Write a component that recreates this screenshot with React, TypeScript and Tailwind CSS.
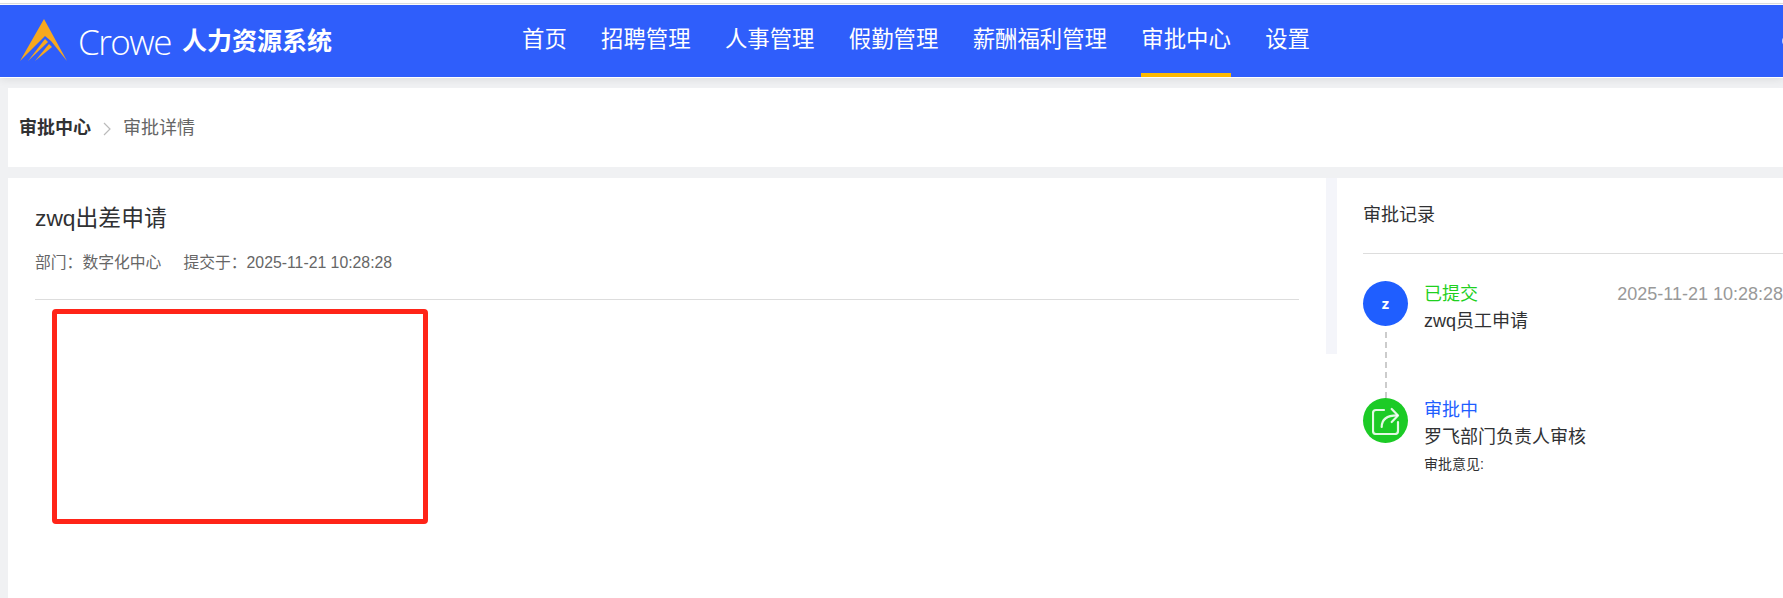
const cjk = "font-['Liberation_Sans','Noto_Sans_CJK_SC',sans-serif]";

const navItems = ["首页", "招聘管理", "人事管理", "假勤管理", "薪酬福利管理", "审批中心", "设置"];

function Logo() {
  return (
    <svg width="48" height="44" viewBox="0 0 48 44" className="shrink-0" fill="#f7a81f">
      <path d="M0 42 L24 0 L47 42 L31 22 L25 17 Z" />
      <path d="M8 42 L25 20 L28 23 Z" />
      <path d="M15 42 L29 25 L32 28 Z" />
    </svg>
  );
}

function Header() {
  return (
    <header className="h-[72px] bg-[#2f5efb] flex items-center shrink-0 relative z-10 shadow-[0_1px_0_#fff,0_3px_8px_rgba(0,0,0,0.08)]">
      <div className="w-[522px] pl-[20px] flex items-center shrink-0">
        <Logo />
        <span className="ml-[10px] text-[35px] leading-none font-['Open_Sans'] font-light text-white tracking-[-1.5px]">Crowe</span>
        <span className="ml-[11px] text-[25px] font-bold text-white pt-[2px]">人力资源系统</span>
      </div>
      <nav className="flex gap-[34.3px] h-full">
        {navItems.map(item => (
          <div key={item} className="relative flex items-center text-[22.4px] text-white whitespace-nowrap pb-[2px]">
            {item}
            {item === "审批中心" && <span className="absolute left-0 right-0 bottom-0 h-[4px] bg-[#fdb900]" />}
          </div>
        ))}
      </nav>
      <span className="absolute left-[1782px] top-[30px] w-[14px] h-[12px] rounded-full border-2 border-white/70" />
    </header>
  );
}

function Breadcrumb() {
  return (
    <div className="ml-[8px] mt-[11px] h-[79px] bg-white pl-[11px] pt-[2px] flex items-center text-[18px]">
      <span className="font-bold text-[#303133]">审批中心</span>
      <svg width="10" height="16" viewBox="0 0 10 16" className="ml-[11px] mr-[11px]">
        <path d="M2 2 L8 8 L2 14" fill="none" stroke="#bbb" strokeWidth="1.2" />
      </svg>
      <span className="text-[#666]">审批详情</span>
    </div>
  );
}

function Timeline() {
  return (
    <div className="mt-[27px] flex flex-col">
      <div className="flex h-[117px] relative">
        <div className="w-[45px] h-[45px] rounded-full bg-[#1f5eff] text-white text-[15px] font-['Open_Sans'] font-bold flex items-center justify-center shrink-0">z</div>
        <div className="ml-[16px] flex-1 leading-[27px] text-[18px]">
          <div className="flex justify-between whitespace-nowrap">
            <span className="text-[#1fd01f]">已提交</span>
            <span className="text-[#999]">2025-11-21 10:28:28</span>
          </div>
          <div className="text-[#303133]">zwq员工申请</div>
        </div>
        <span className="absolute left-[22px] top-[51px] h-[66px] border-l-2 border-dashed border-[#ccc]" />
      </div>
      <div className="flex relative">
        <div className="w-[45px] h-[45px] rounded-full bg-[#1ccb26] flex items-center justify-center shrink-0">
          <svg width="28" height="28" viewBox="0 0 28 28" fill="none" stroke="#fff" strokeWidth="2.2" strokeOpacity="0.88" strokeLinecap="round" strokeLinejoin="round">
            <path d="M12 3 H4 Q1 3 1 6 V24 Q1 27 4 27 H23 Q26 27 26 24 V15" />
            <path d="M9.7 20 C9.7 12 15 8.3 25 8.3" />
            <path d="M19.7 2 L26 8.5 L19.7 15" />
          </svg>
        </div>
        <div className="ml-[16px] flex-1 leading-[27px] text-[18px] -mt-[1px]">
          <div className="text-[#1f5eff]">审批中</div>
          <div className="text-[#303133]">罗飞部门负责人审核</div>
          <div className="text-[14px] leading-[20px] mt-[3px] text-[#303133]">审批意见:</div>
        </div>
      </div>
    </div>
  );
}

function Main() {
  return (
    <div className="ml-[8px] mt-[11px] flex-1 bg-white flex items-start">
      <section className="w-[1318px] shrink-0 pl-[27px] pr-[27px]">
        <h1 className="pt-[25px] text-[22.8px] leading-[30px] font-normal text-[#303133]">zwq出差申请</h1>
        <div className="mt-[20px] h-[34px] pb-[14px] text-[15.8px] leading-[20px] text-[#666] flex gap-[22px] whitespace-nowrap">
          <span>部门：数字化中心</span>
          <span>提交于：2025-11-21 10:28:28</span>
        </div>
        <div className="mt-[12px] border-t border-[#ddd]" />
        <div className="mt-[9px] ml-[17px] w-[376px] h-[215px] border-[5px] border-[#ff2418] rounded-[4px]" />
      </section>
      <div className="w-[11px] h-[176px] bg-[#f4f5fa] shrink-0" />
      <section className="flex-1 min-w-0 pl-[26px] overflow-hidden">
        <h2 className="pt-[23px] text-[18px] leading-[28px] font-normal text-[#303133]">审批记录</h2>
        <div className="mt-[24px] border-t border-[#ddd]" />
        <Timeline />
      </section>
    </div>
  );
}

export default function App() {
  return (
    <div className={`${cjk} w-[1783px] h-[598px] overflow-hidden bg-[#f0f1f3] flex flex-col`}>
      <div className="h-[5px] bg-white shrink-0 pt-[3px]">
        <div className="border-t border-[#ddd]" />
      </div>
      <Header />
      <Breadcrumb />
      <Main />
    </div>
  );
}
